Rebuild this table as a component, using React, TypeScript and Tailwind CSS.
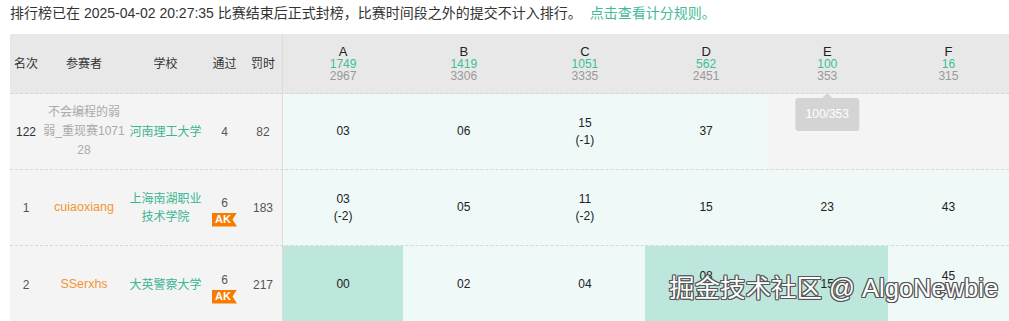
import React from "react";

type Cell = { lines?: string[]; tone: "none" | "ok" | "first" };

type Row = {
  rank: string;
  rankStrong?: boolean;
  name: string;
  nameTone: "muted" | "orange";
  school: string;
  solved: string;
  penalty: string;
  ak?: boolean;
  cells: Cell[];
};

const PROBLEMS = [
  { id: "A", ac: "1749", total: "2967" },
  { id: "B", ac: "1419", total: "3306" },
  { id: "C", ac: "1051", total: "3335" },
  { id: "D", ac: "562", total: "2451" },
  { id: "E", ac: "100", total: "353" },
  { id: "F", ac: "16", total: "315" },
];

const ROWS: Row[] = [
  {
    rank: "122",
    rankStrong: true,
    name: "不会编程的弱弱_重现赛107128",
    nameTone: "muted",
    school: "河南理工大学",
    solved: "4",
    penalty: "82",
    cells: [
      { lines: ["03"], tone: "ok" },
      { lines: ["06"], tone: "ok" },
      { lines: ["15", "(-1)"], tone: "ok" },
      { lines: ["37"], tone: "ok" },
      { tone: "none" },
      { tone: "none" },
    ],
  },
  {
    rank: "1",
    name: "cuiaoxiang",
    nameTone: "orange",
    school: "上海南湖职业技术学院",
    solved: "6",
    penalty: "183",
    ak: true,
    cells: [
      { lines: ["03", "(-2)"], tone: "ok" },
      { lines: ["05"], tone: "ok" },
      { lines: ["11", "(-2)"], tone: "ok" },
      { lines: ["15"], tone: "ok" },
      { lines: ["23"], tone: "ok" },
      { lines: ["43"], tone: "ok" },
    ],
  },
  {
    rank: "2",
    name: "SSerxhs",
    nameTone: "orange",
    school: "大英警察大学",
    solved: "6",
    penalty: "217",
    ak: true,
    cells: [
      { lines: ["00"], tone: "first" },
      { lines: ["02"], tone: "ok" },
      { lines: ["04"], tone: "ok" },
      { lines: ["08", "(-1)"], tone: "first" },
      { lines: ["15"], tone: "first" },
      { lines: ["45", "(-1)"], tone: "ok" },
    ],
  },
];

const GRID = "grid grid-cols-[32px_84px_79px_39px_38px_repeat(6,minmax(0,1fr))]";

const TONE_BG: Record<Cell["tone"], string> = {
  none: "bg-[#f4f4f4]",
  ok: "bg-[#eff9f7]",
  first: "bg-[#bde6dc]",
};

function AkBadge() {
  return (
    <span className="mt-[2px] inline-flex h-[14px] w-[25px] items-center pl-[3px] text-[11px] font-bold leading-none text-white bg-[#f57c00] [clip-path:polygon(0_0,100%_0,82%_50%,100%_100%,0_100%)]">
      AK
    </span>
  );
}

export default function App() {
  return (
    <div
      className="relative h-[321px] overflow-hidden bg-white text-[#333]"
      style={{ fontFamily: '"Liberation Sans", "Noto Sans CJK SC", sans-serif' }}
    >
      <p className="flex h-[34px] items-start pl-[10px] pt-[3px] text-[14px] leading-[20px]">
        <span>排行榜已在 2025-04-02 20:27:35 比赛结束后正式封榜，比赛时间段之外的提交不计入排行。</span>
        <a className="ml-[8px] text-[#45b99c]">点击查看计分规则。</a>
      </p>

      <div className="ml-[10px] text-[12px]">
        {/* 表头 */}
        <div className={`${GRID} h-[60px] bg-[#e8e8e8] border-b border-dashed border-[#d6d6d6]`}>
          <div className="flex items-center justify-center">名次</div>
          <div className="flex items-center justify-center">参赛者</div>
          <div className="flex items-center justify-center">学校</div>
          <div className="flex items-center justify-center">通过</div>
          <div className="flex items-center justify-center">罚时</div>
          {PROBLEMS.map((p, i) => (
            <div
              key={p.id}
              className={`relative flex flex-col items-center justify-center pt-[1px] leading-[12px] ${i === 0 ? "border-l border-[#dcdcdc]" : ""}`}
            >
              <span className="text-[13px] text-[#222]">{p.id}</span>
              <span className="text-[#3dbf97]">{p.ac}</span>
              <span className="text-[#999]">{p.total}</span>
              {p.id === "E" && (
                <div className="absolute left-1/2 top-[59px] z-10 -translate-x-1/2">
                  <div className="mx-auto h-0 w-0 border-x-[5px] border-b-[5px] border-x-transparent border-b-[#d4d4d4]" />
                  <div className="rounded-[3px] bg-[#d4d4d4] px-[10px] py-[8px] text-[12px] leading-[17px] text-white">
                    100/353
                  </div>
                </div>
              )}
            </div>
          ))}
        </div>

        {ROWS.map((r, ri) => (
          <div
            key={r.rank}
            className={`${GRID} ${ri === 2 ? "h-[77px]" : "h-[76px]"} bg-[#f4f4f4] ${ri < 2 ? "border-b border-dashed border-[#d8d8d8]" : ""}`}
          >
            <div className={`flex items-center justify-center ${r.rankStrong ? "font-medium text-[#333]" : "text-[#555]"}`}>
              {r.rank}
            </div>
            <div className="flex items-center justify-center px-[1px]">
              <span
                className={`break-all text-center leading-[19px] ${r.nameTone === "muted" ? "text-[#aaa]" : "text-[12.5px] text-[#f39533]"}`}
              >
                {r.name}
              </span>
            </div>
            <div className="flex items-center justify-center px-[3px]">
              <span className="text-center leading-[18px] text-[#3ab595]">{r.school}</span>
            </div>
            <div className="flex flex-col items-center justify-center text-[#555]">
              <span className={r.ak ? "mt-[6px] leading-[16px]" : ""}>{r.solved}</span>
              {r.ak && <AkBadge />}
            </div>
            <div className="flex items-center justify-center text-[#555]">{r.penalty}</div>
            {r.cells.map((c, ci) => (
              <div
                key={ci}
                className={`flex flex-col items-center justify-center leading-[17px] text-[#222] ${TONE_BG[c.tone]} ${ci === 0 ? "border-l border-[#dcdcdc]" : ""}`}
              >
                {c.lines?.map((l) => <span key={l}>{l}</span>)}
              </div>
            ))}
          </div>
        ))}
      </div>

      {/* 水印 */}
      <div className="pointer-events-none absolute left-[669px] top-[273px] whitespace-nowrap text-[25.5px] leading-[30px] text-white [text-shadow:-1px_-1px_0_#555,1px_-1px_0_#555,-1px_1px_0_#555,1px_1px_0_#555,0_1px_0_#555,0_-1px_0_#555,1px_0_0_#555,-1px_0_0_#555]">
        掘金技术社区 @ AlgoNewbie
      </div>
    </div>
  );
}
